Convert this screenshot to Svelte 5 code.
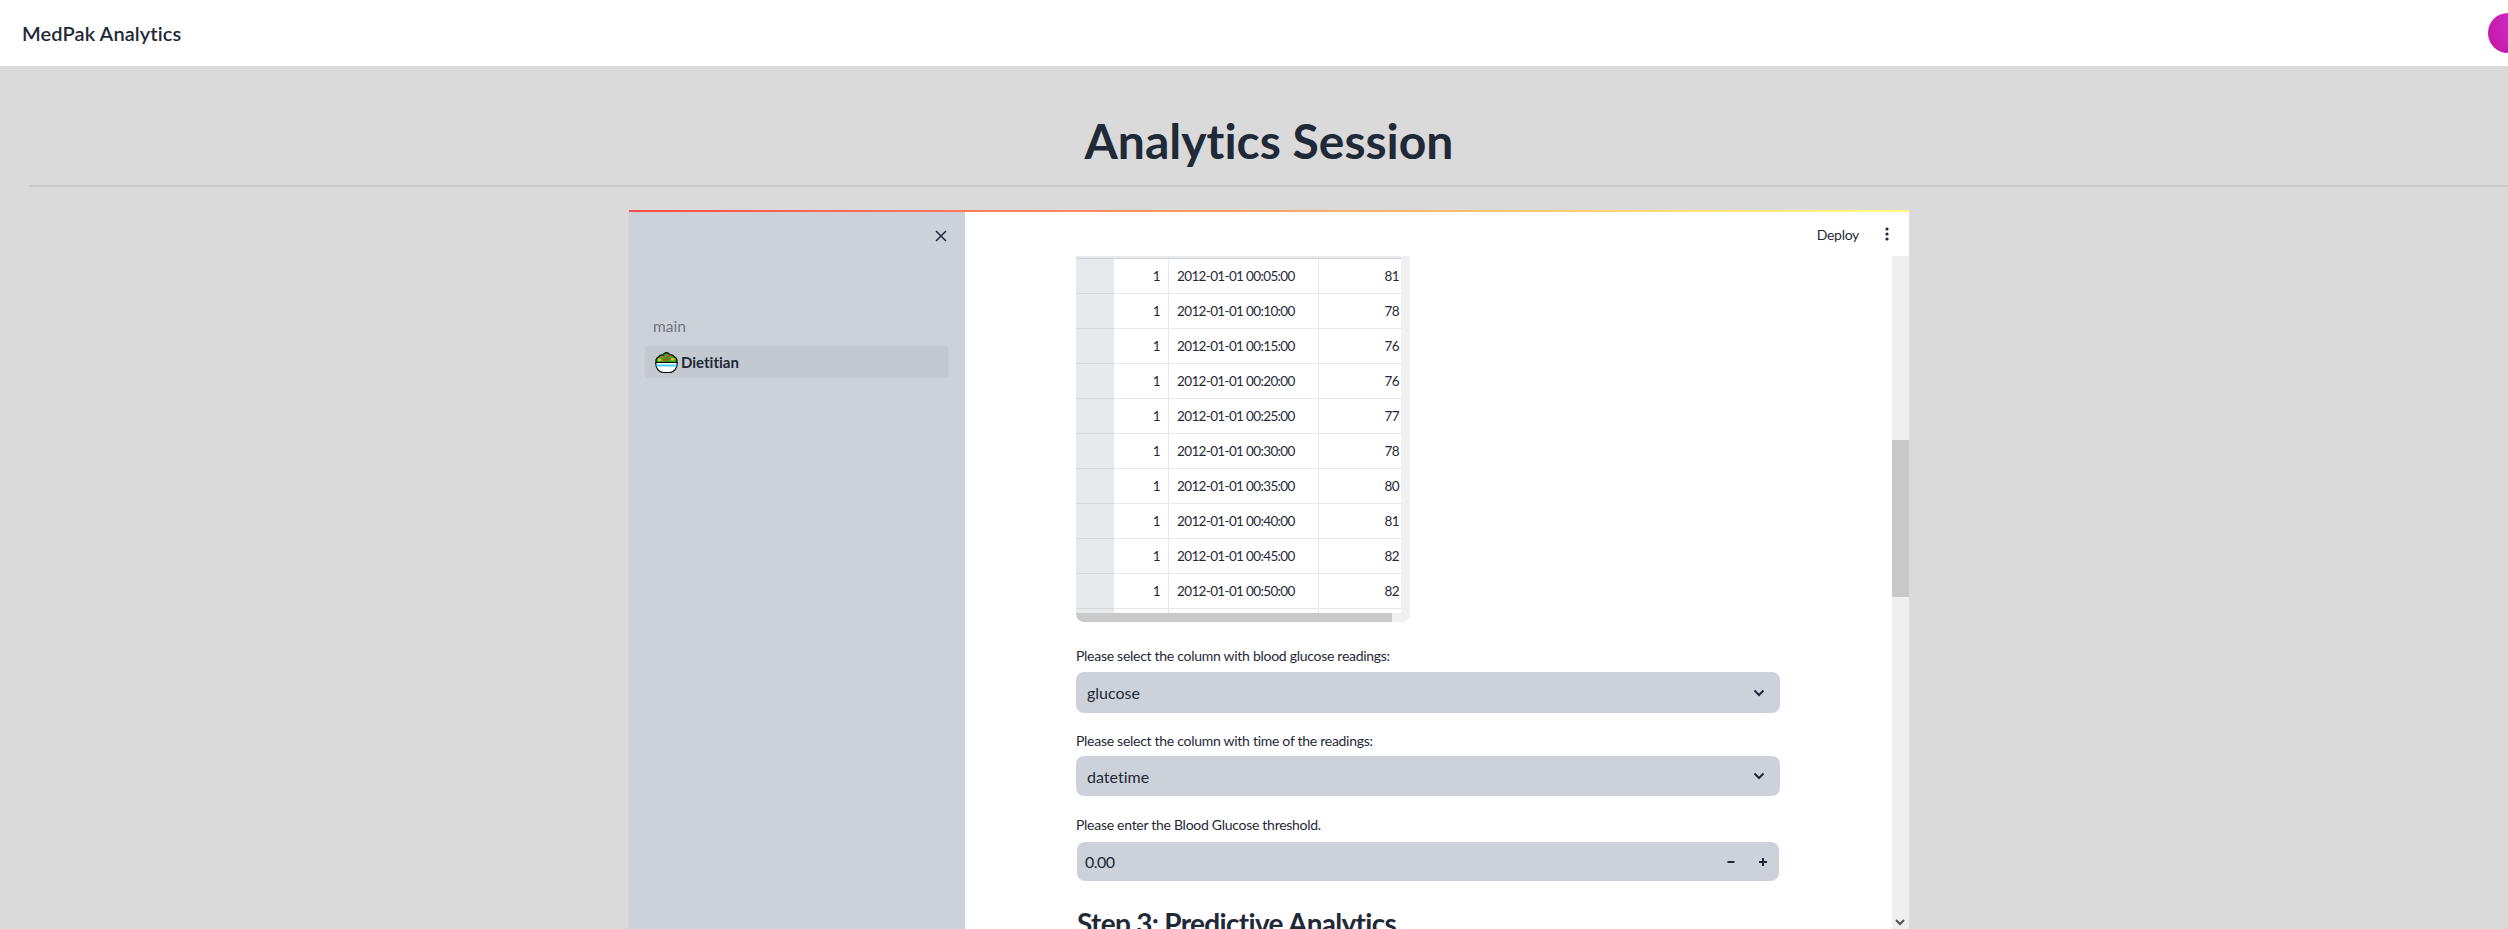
<script>
  const rows = [
    ['00:05:00', 81], ['00:10:00', 78], ['00:15:00', 76], ['00:20:00', 76], ['00:25:00', 77],
    ['00:30:00', 78], ['00:35:00', 80], ['00:40:00', 81], ['00:45:00', 82], ['00:50:00', 82],
  ];
</script>

<div class="page">
  <header class="topbar">
    <span class="brand">MedPak Analytics</span>
    <span class="avatar"></span>
  </header>

  <main class="session">
    <h1>Analytics Session</h1>
    <hr />

    <section class="frame">
      <aside class="sidebar">
        <button class="close" aria-label="Close sidebar">
          <svg viewBox="0 0 12 12" width="12" height="12"><path d="M1 1l10 10M11 1L1 11" /></svg>
        </button>
        <div class="nav-title">main</div>
        <a class="nav-item" href="#dietitian">
          <svg class="salad" viewBox="0 0 23 21" width="23" height="21">
            <path d="M1.800 11a3.800 3.800 0 0 1 1.700-6a3.800 3.800 0 0 1 4.500-2a3.800 3.800 0 0 1 7 0a3.800 3.800 0 0 1 4.500 2a3.800 3.800 0 0 1 1.700 6z" fill="#27ab20" stroke="#000" stroke-width="1.200" />
            <rect x="6" y="4" width="3" height="2" fill="#ea4f38" />
            <rect x="12" y="3" width="4" height="2" fill="#e5442f" />
            <rect x="3" y="6.500" width="3.500" height="2.500" fill="#f7b421" />
            <rect x="9.500" y="7" width="3" height="2.500" fill="#dc3a2a" />
            <rect x="12" y="6" width="2.500" height="1.500" fill="#dc3a2a" />
            <rect x="16" y="6" width="3.500" height="2.500" fill="#f7b421" />
            <path d="M.8 10.500h21.400v1c0 5-3.500 9-7.500 9h-6.400c-4 0-7.500-4-7.500-9z" fill="#fff" stroke="#000" stroke-width="1.200" />
            <rect x="1.500" y="12.500" width="20" height="2" fill="#3fd2f8" />
          </svg>
          <span>Dietitian</span>
        </a>
      </aside>

      <div class="app">
        <div class="toolbar">
          <span class="deploy">Deploy</span>
          <svg class="kebab" viewBox="0 0 4 14" width="4" height="14">
            <circle cx="2" cy="2" r="1.600" /><circle cx="2" cy="7" r="1.600" /><circle cx="2" cy="12" r="1.600" />
          </svg>
        </div>

        <div class="scroller">
          <div class="content">
            <div class="table">
              <div class="table-view">
                <div class="grid-head">
                  <i class="c-index"></i><i class="c-one"></i><i class="c-time"></i><i class="c-val"></i>
                </div>
                {#each rows as row}
                  <div class="grid-row">
                    <span class="c-index"></span>
                    <span class="c-one num">1</span>
                    <span class="c-time">2012-01-01 {row[0]}</span>
                    <span class="c-val num">{row[1]}</span>
                  </div>
                {/each}
                <div class="grid-row partial">
                  <span class="c-index"></span><span class="c-one"></span><span class="c-time"></span><span class="c-val"></span>
                </div>
              </div>
              <div class="vbar"></div>
              <div class="hbar"><div class="hthumb"></div></div>
            </div>

            <label class="field-label first">Please select the column with blood glucose readings:</label>
            <div class="select tall">
              <span>glucose</span>
              <svg viewBox="0 0 12 8" width="12" height="8"><path d="M1.500 1.500L6 6l4.500-4.500" /></svg>
            </div>

            <label class="field-label">Please select the column with time of the readings:</label>
            <div class="select">
              <span>datetime</span>
              <svg viewBox="0 0 12 8" width="12" height="8"><path d="M1.500 1.500L6 6l4.500-4.500" /></svg>
            </div>

            <label class="field-label third">Please enter the Blood Glucose threshold.</label>
            <div class="number">
              <span>0.00</span>
              <div class="steps">
                <svg viewBox="0 0 10 10" width="10" height="10"><path d="M1.500 5h7" /></svg>
                <svg viewBox="0 0 10 10" width="10" height="10"><path d="M1 5h8M5 1v8" /></svg>
              </div>
            </div>

            <h2>Step 3: Predictive Analytics</h2>
          </div>

          <div class="page-scroll">
            <div class="page-thumb"></div>
            <svg class="page-down" viewBox="0 0 10 7" width="10" height="7"><path d="M1 1l4 4 4-4" /></svg>
          </div>
        </div>
      </div>
    </section>
  </main>
</div>

<style>
  :global(body) {
    margin: 0;
    background: #dadada;
    overflow: hidden;
    font-family: "Lato", "Noto Sans", sans-serif;
    font-variant-ligatures: none;
    color: #1f2937;
  }

  .page {
    width: 2508px;
    height: 929px;
    overflow: hidden;
    background: #dadada;
  }

  /* top bar */
  .topbar {
    height: 66px;
    background: #fff;
    display: flex;
    align-items: center;
    justify-content: space-between;
    padding-left: 22px;
    box-sizing: border-box;
  }

  .brand {
    font-size: 20px;
    font-weight: 600;
    letter-spacing: 0.100px;
  }

  .avatar {
    width: 40px;
    height: 40px;
    flex: none;
    margin-right: -20px;
    border-radius: 50%;
    background: radial-gradient(circle at 92% 32%, #d07ec8 0%, #cc28c4 38%, #c3149c 100%);
  }

  /* page heading */
  .session {
    width: 2480px;
    margin-left: 29px;
  }

  h1 {
    margin: 0;
    padding-top: 39px;
    height: 79px;
    line-height: 71px;
    text-align: center;
    font-size: 48px;
    font-weight: 700;
  }

  hr {
    margin: 1px 0 23px;
    border: 0;
    height: 2px;
    background: #c8c8c8;
  }

  /* embedded app */
  .frame {
    width: 1280px;
    height: 719px;
    margin: 0 auto;
    display: flex;
    border-top: 2px solid transparent;
    border-image: linear-gradient(90deg, #ff4b4b, #fffd80) 1;
    background: #fff;
  }

  .sidebar {
    width: 336px;
    flex: none;
    background: #cdd2da;
    padding: 18px 16px 0;
    box-sizing: border-box;
  }

  .close {
    display: block;
    margin-left: auto;
    margin-right: 2px;
    padding: 0;
    border: 0;
    background: none;
    width: 12px;
    height: 12px;
  }

  .close svg {
    display: block;
  }

  .close path {
    fill: none;
    stroke: #1f2937;
    stroke-width: 1.500;
  }

  .nav-title {
    margin: 74px 0 0 8px;
    font-size: 15.500px;
    line-height: 20px;
    color: #6f7581;
  }

  .nav-item {
    margin-top: 10px;
    height: 32px;
    width: 304px;
    display: flex;
    align-items: center;
    gap: 3px;
    padding-left: 10px;
    box-sizing: border-box;
    background: #c3c8d1;
    border-radius: 4px;
    font-size: 15px;
    font-weight: 700;
    color: #1f2937;
    text-decoration: none;
  }

  .salad {
    flex: none;
  }

  .app {
    flex: 1;
    min-width: 0;
    display: flex;
    flex-direction: column;
  }

  .toolbar {
    height: 44px;
    flex: none;
    display: flex;
    align-items: center;
    justify-content: flex-end;
    padding: 0 20px 0 0;
    box-sizing: border-box;
  }

  .deploy {
    font-size: 14px;
    letter-spacing: -0.300px;
    margin-right: 26px;
  }

  .kebab {
    fill: #1f2937;
  }

  .scroller {
    flex: 1;
    display: flex;
    min-height: 0;
  }

  .content {
    flex: 1;
    padding-left: 111px;
    overflow: hidden;
    min-width: 0;
  }

  /* dataframe */
  .table {
    position: relative;
    width: 334px;
    height: 366px;
    overflow: hidden;
    background: #f0f0f0;
    border-radius: 0 0 8px 8px;
  }

  .table-view {
    width: 325px;
    height: 357px;
    overflow: hidden;
    background: #fff;
  }

  .grid-head,
  .grid-row {
    display: grid;
    grid-template-columns: 38px 55px 150px 82px;
  }

  .grid-head {
    background: #e8e9ed;
    border-bottom: 1px solid #cfd2d8;
    height: 1px;
    padding-top: 1px;
  }

  .grid-head i {
    display: block;
  }

  .grid-row {
    height: 35px;
    font-size: 13.500px;
    letter-spacing: -0.640px;
    line-height: 34px;
  }

  .grid-row span {
    border-right: 1px solid #e7e8eb;
    border-bottom: 1px solid #e7e8eb;
    box-sizing: border-box;
    padding: 0 8px;
    white-space: nowrap;
    overflow: hidden;
  }

  .grid-row .c-index {
    background: #e8e9ed;
    border-right: 0;
    border-bottom-color: #d3d6db;
  }

  .grid-row .c-val {
    border-right: 0;
    padding-right: 2px;
  }

  .grid-row .num {
    text-align: right;
  }

  .vbar {
    position: absolute;
    top: 0;
    right: 0;
    bottom: 0;
    width: 9px;
    background: #f0f0f0;
  }

  .hbar {
    position: absolute;
    left: 0;
    right: 0;
    bottom: 0;
    height: 9px;
    background: #f0f0f0;
  }

  .hthumb {
    width: 316px;
    height: 100%;
    background: #c9c9c9;
    border-bottom-left-radius: 8px;
  }

  /* inputs */
  .field-label {
    display: block;
    font-size: 14px;
    letter-spacing: -0.280px;
    line-height: 20px;
    margin: 0 0 5px;
  }

  .field-label.first {
    margin-top: 24px;
    margin-bottom: 6px;
  }

  .field-label.third {
    margin-top: 19px;
    margin-bottom: 7px;
  }

  .select {
    width: 704px;
    height: 40px;
    display: flex;
    align-items: center;
    justify-content: space-between;
    padding: 0 15px 0 11px;
    box-sizing: border-box;
    background: #cdd2da;
    border-radius: 8px;
    font-size: 16px;
    margin-bottom: 18px;
  }

  .select.tall {
    height: 41px;
    margin-bottom: 18px;
  }

  .select path,
  .steps path {
    fill: none;
    stroke: #1f2937;
    stroke-width: 2;
  }

  .number {
    width: 702px;
    height: 39px;
    margin-left: 1px;
    display: flex;
    align-items: center;
    justify-content: space-between;
    padding: 0 11px 0 8px;
    box-sizing: border-box;
    background: #cdd2da;
    border-radius: 8px;
    font-size: 16px;
    letter-spacing: -0.500px;
  }

  .steps {
    display: flex;
    gap: 22px;
  }

  h2 {
    margin: 24px 0 0 1px;
    font-size: 28px;
    letter-spacing: -0.700px;
    line-height: 36px;
    font-weight: 700;
    white-space: nowrap;
  }

  /* outer scrollbar */
  .page-scroll {
    width: 17px;
    flex: none;
    position: relative;
    background: #efefef;
  }

  .page-thumb {
    position: absolute;
    top: 184px;
    left: 0;
    right: 0;
    height: 157px;
    background: #c9c9c9;
  }

  .page-down {
    position: absolute;
    left: 3px;
    top: 663px;
  }

  .page-down path {
    fill: none;
    stroke: #555;
    stroke-width: 2;
  }
</style>
